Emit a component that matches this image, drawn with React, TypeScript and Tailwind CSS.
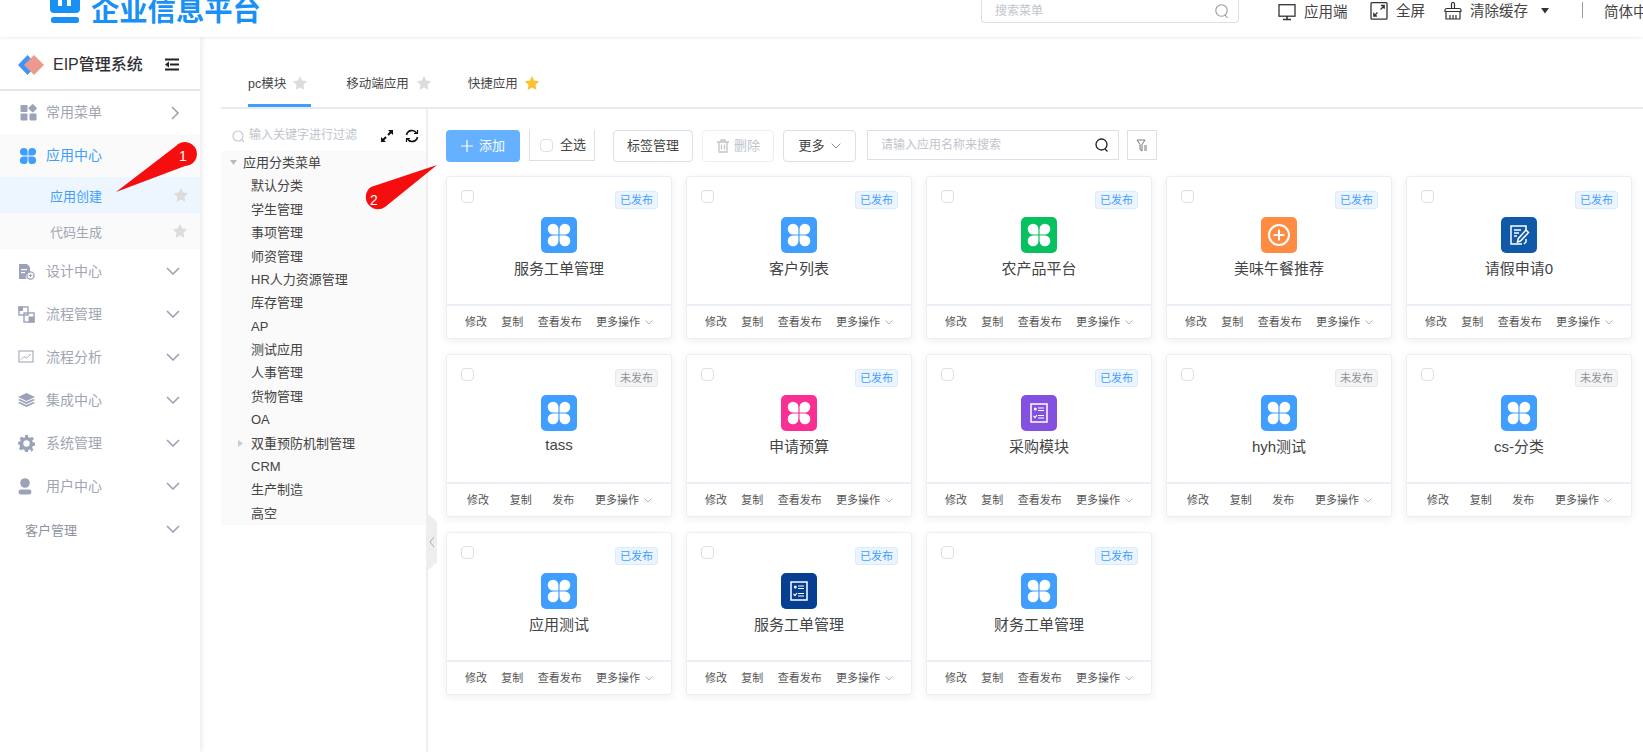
import React from "react";

const Clover = ({ c = "#fff", s = 28 }: { c?: string; s?: number }) => (
  <svg width={s} height={s} viewBox="0 0 24 24">
    <path fill={c} d="M11.5 11.5H7a4.6 4.6 0 1 1 4.5-4.5zM12.5 11.5V7A4.6 4.6 0 1 1 17 11.5zM11.5 12.5V17A4.6 4.6 0 1 1 7 12.5zM12.5 12.5H17A4.6 4.6 0 1 1 12.5 17z" />
  </svg>
);

const Star = ({ c = "#dcdcdc", s = 16 }: { c?: string; s?: number }) => (
  <svg width={s} height={s} viewBox="0 0 24 24">
    <path fill={c} d="M12 1.5l3.2 6.9 7.5.9-5.5 5.2 1.4 7.5L12 18.8l-6.6 3.7 1.4-7.5L1.3 9.3l7.5-.9z" />
  </svg>
);

const Chevron = ({ c = "#9aa3b4", s = 14, w = 1.6 }: { c?: string; s?: number; w?: number }) => (
  <svg width={s} height={s * 0.6} viewBox="0 0 14 8.4" fill="none">
    <path d="M1 1l6 6 6-6" stroke={c} strokeWidth={w} />
  </svg>
);

const G = "#9aa3b8";
const ic = {
  common: (
    <svg width="17" height="17" viewBox="0 0 17 17" fill={G}>
      <rect x="0.5" y="1" width="7" height="7" rx="1" />
      <rect x="9.5" y="1" width="6.4" height="6.4" rx="1" transform="rotate(45 12.7 4.2)" />
      <rect x="0.5" y="9.5" width="7" height="7" rx="1" />
      <rect x="9.5" y="9.5" width="7" height="7" rx="1" />
    </svg>
  ),
  design: (
    <svg width="17" height="17" viewBox="0 0 17 17" fill={G}>
      <path d="M1 1h8l3 3v5a4.5 4.5 0 0 0-3.5 7H1z" />
      <rect x="3" y="6" width="6" height="1.2" fill="#fff" />
      <rect x="3" y="9" width="4" height="1.2" fill="#fff" />
      <circle cx="12.5" cy="12.5" r="3.6" fill="none" stroke={G} strokeWidth="1.3" />
      <path d="M10.7 12.5h3.6M12.5 10.7v3.6" stroke={G} strokeWidth="1.1" />
    </svg>
  ),
  flow: (
    <svg width="17" height="17" viewBox="0 0 17 17" fill="none" stroke={G}>
      <rect x="1" y="1" width="9" height="8" strokeWidth="1.4" />
      <rect x="6" y="7" width="10" height="9" strokeWidth="1.4" />
      <rect x="1" y="1" width="3.5" height="3.5" fill={G} />
      <rect x="11" y="11" width="5" height="5" fill={G} />
    </svg>
  ),
  chart: (
    <svg width="16" height="14" viewBox="0 0 16 14" fill="none" stroke="#a9afbf">
      <rect x="1" y="1" width="14" height="11" strokeWidth="1.2" />
      <path d="M3 9.5l3-3 2.5 1.5L13 4" strokeWidth="1" />
    </svg>
  ),
  layers: (
    <svg width="17" height="14" viewBox="0 0 17 14" fill={G}>
      <path d="M8.5 0L17 4l-8.5 4L0 4z" />
      <path d="M1.8 6L0 7l8.5 4L17 7l-1.8-1-6.7 3.1zM1.8 9L0 10l8.5 4 8.5-4-1.8-1-6.7 3.1z" />
    </svg>
  ),
  gear: (
    <svg width="17" height="17" viewBox="0 0 24 24" fill={G}>
      <path d="M10 0h4l.7 3.2 2.3 1 2.8-1.8 2.8 2.8L20 8l1 2.3 3 .7v4l-3 .7-1 2.3 1.8 2.8-2.8 2.8L17 20.2l-2.3 1L14 24h-4l-.7-2.8-2.3-1-2.8 1.6-2.8-2.8L3 16l-1-2.3L0 13v-3l2.8-.7 1-2.3L2.2 5l2.8-2.8L7.8 4l2.3-1zM12 7.5a4.5 4.5 0 1 0 0 9 4.5 4.5 0 0 0 0-9z" />
    </svg>
  ),
  user: (
    <svg width="14" height="17" viewBox="0 0 14 17" fill={G}>
      <circle cx="7" cy="5" r="4.8" />
      <rect x="0.5" y="11.5" width="13" height="5" rx="2.4" />
    </svg>
  ),
};

const menu1 = [{ t: "设计中心", i: ic.design }, { t: "流程管理", i: ic.flow }, { t: "流程分析", i: ic.chart }, { t: "集成中心", i: ic.layers }, { t: "系统管理", i: ic.gear }, { t: "用户中心", i: ic.user }];

const Sidebar = () => (
  <aside className="relative z-10 flex w-[200px] shrink-0 flex-col bg-white shadow-[2px_0_5px_rgba(0,0,0,0.08)]">
    <div className="flex h-[54px] shrink-0 items-center border-b-2 border-[#e5e6ea] pl-[18px] pr-[21px] pt-[3px]">
      <svg width="26" height="20" viewBox="0 0 26 20">
        <path d="M9.5 0l9.5 10-9.5 10L0 10z" fill="#3f95f7" />
        <path d="M16 0l10 10-10 10L6 10z" fill="#ec9a8d" />
      </svg>
      <span className="ml-[9px] flex-1 text-[16px] font-medium text-[#303133]">EIP管理系统</span>
      <svg width="14" height="13" viewBox="0 0 14 13" fill="#222">
        <rect y="0.5" width="14" height="2" />
        <rect x="5" y="5.5" width="9" height="2" />
        <rect y="10.5" width="14" height="2" />
        <path d="M4 3.5v6L0 6.500z" />
      </svg>
    </div>
    <div className="flex h-[43px] items-center pl-5 pr-[20px]">
      <span className="flex w-[26px]">{ic.common}</span>
      <span className="flex-1 text-[14px] text-[#a0a5b2]">常用菜单</span>
      <svg width="9" height="14" viewBox="0 0 9 14" fill="none"><path d="M1 1l6 6-6 6" stroke="#9aa3b4" strokeWidth="1.6" /></svg>
    </div>
    <div className="bg-[#fafafa]">
      <div className="flex h-[43px] items-center pl-[18px]">
        <span className="flex w-[28px]"><Clover c="#409eff" s={20} /></span>
        <span className="text-[14px] text-[#409eff]">应用中心</span>
      </div>
      <div className="flex h-[36px] items-center bg-[#edf6ff] pl-[50px] pr-[11px]">
        <span className="mt-[3px] flex-1 text-[13px] text-[#409eff]">应用创建</span>
        <Star />
      </div>
      <div className="flex h-[36px] items-center pl-[50px] pr-3">
        <span className="mt-[3px] flex-1 text-[13px] text-[#a0a5b2]">代码生成</span>
        <Star />
      </div>
    </div>
    <div className="pt-[0.5px]">
      {menu1.map((m) => (
        <div key={m.t} className="flex h-[43px] items-center pl-[18px] pr-[20px]">
          <span className="flex w-[28px]">{m.i}</span>
          <span className="flex-1 text-[14px] text-[#a0a5b2]">{m.t}</span>
          <Chevron />
        </div>
      ))}
      <div className="flex h-[43px] items-center pl-[25px] pr-[20px]">
        <span className="mt-[3px] flex-1 text-[13px] text-[#8d929e]">客户管理</span>
        <Chevron />
      </div>
    </div>
  </aside>
);

const Header = () => (
  <header className="relative z-20 flex h-[37px] shrink-0 items-start overflow-hidden bg-white text-[14px] text-[#444] shadow-[0_1px_4px_rgba(0,0,0,0.08)] [&>*]:shrink-0">
    <div className="ml-[50px] mt-[-9px] flex w-[212px] items-center">
      <svg className="mt-[-6px]" width="30" height="32" viewBox="0 0 30 32" fill="#1890f5">
        <path d="M0 0h30v17a4 4 0 0 1-4 4H4a4 4 0 0 1-4-4zM8 8v6h4V8zm9 0v6h4V8z" fillRule="evenodd" />
        <rect x="1" y="25" width="28" height="6" rx="2.5" />
      </svg>
      <span className="ml-[11px] whitespace-nowrap text-[28.3px] font-bold leading-[40px] text-[#1890f5]">企业信息平台</span>
    </div>
    <div className="ml-[719px] flex h-[23px] w-[258px] items-center justify-between rounded-b-sm border border-t-0 border-[#dcdfe6] pl-[13px] pr-[9px] text-[12px] text-[#c0c4cc]">
      <span>搜索菜单</span>
      <svg width="14" height="16" viewBox="0 0 14 16" fill="none" stroke="#999" strokeWidth="1.1"><circle cx="6.5" cy="7.5" r="5.7" /><path d="M10 12l2.5 3" /></svg>
    </div>
    <div className="ml-[39px] mt-[2px] flex items-center">
      <svg width="18" height="17" viewBox="0 0 18 17" fill="none" stroke="#333" strokeWidth="1.3"><rect x="1" y="0.7" width="16" height="11.5" /><path d="M9 12v3M5 15.5h8" strokeWidth="1.6" /></svg>
      <span className="ml-2 w-[44px] whitespace-nowrap text-[14.5px] leading-5">应用端</span>
    </div>
    <div className="ml-[22px] mt-[1px] flex items-center">
      <svg width="18" height="18" viewBox="0 0 18 18" fill="none" stroke="#333" strokeWidth="1.3"><rect x="1" y="0.7" width="16" height="16.5" rx="1" /><path d="M10.5 7.5L14 4M11 3.5h3.2v3.2M7.5 10.5L4 14M3.8 10.8V14h3.2" /></svg>
      <span className="ml-2 whitespace-nowrap text-[14.5px] leading-5">全屏</span>
    </div>
    <div className="ml-[19px] mt-[1px] flex items-center">
      <svg width="18" height="18" viewBox="0 0 18 18" fill="none" stroke="#333" strokeWidth="1.2"><path d="M7.5 6.5V2a1.5 1.5 0 0 1 3 0v4.5" /><path d="M1 8c0-1 1-1.500 2-1.500h12c1 0 2 .5 2 1.500v1.500H1zM2 9.500V17h14V9.500M6 13v4M9 13v4M12 13v4" /></svg>
      <span className="ml-2 whitespace-nowrap text-[14.5px] leading-5">清除缓存</span>
    </div>
    <svg className="ml-[13px] mt-[8px]" width="8" height="6" viewBox="0 0 8 6" fill="#333"><path d="M0 0h8L4 5.500z" /></svg>
    <div className="ml-[33px] mt-[2px] h-4 w-px bg-[#999]" />
    <span className="ml-[21px] mt-[2px] whitespace-nowrap text-[14.5px] leading-5">简体中文</span>
  </header>
);

const tree = ["默认分类", "学生管理", "事项管理", "师资管理", "HR人力资源管理", "库存管理", "AP", "测试应用", "人事管理", "货物管理", "OA", "双重预防机制管理", "CRM", "生产制造", "高空"];

const TreePanel = () => (
  <div className="relative w-[207px] shrink-0 border-r-2 border-[#eeeef0]">
    <div className="flex h-[42px] items-end pb-[8px] pl-[11px] text-[#c0c4cc]">
      <svg width="13" height="13" viewBox="0 0 13 13" fill="none" stroke="#c0c4cc" strokeWidth="1.1"><circle cx="6" cy="6" r="5" /><path d="M10 10l2 2" /></svg>
      <span className="ml-[4px] w-[131px] whitespace-nowrap text-[12px] leading-4">输入关键字进行过滤</span>
      <svg width="14" height="14" viewBox="0 0 14 14" fill="#111"><path d="M8 1h5v5l-1.800-1.800-2.500 2.500-1.400-1.400 2.500-2.500zM6 13H1V8l1.800 1.800 2.500-2.500 1.400 1.400-2.500 2.500z" /></svg>
      <svg className="ml-[11px]" width="14" height="14" viewBox="0 0 14 14" fill="none" stroke="#111" strokeWidth="1.6"><path d="M1.500 6A5.500 5.500 0 0 1 11.500 4M12.500 8A5.500 5.500 0 0 1 2.500 10" /><path d="M12.500 1v3.500H9M1.500 13V9.500H5" strokeWidth="1.200" /></svg>
    </div>
    <div className="h-[374px] bg-[#fafafa] text-[13px] text-[#555860]">
      <div className="flex h-[23.4px] items-center pl-[9px]">
        <svg width="7" height="5" viewBox="0 0 7 5" fill="#bbb"><path d="M0 0h7L3.500 5z" /></svg>
        <span className="ml-[6px] text-[#444]">应用分类菜单</span>
      </div>
      {tree.map((t) => (
        <div key={t} className="relative flex h-[23.4px] items-center pl-[30px] text-[#444]">
          {t === "双重预防机制管理" && (
            <svg className="absolute left-[17px]" width="5" height="7" viewBox="0 0 5 7" fill="#c8ccd4"><path d="M0 0l5 3.500L0 7z" /></svg>
          )}
          {t}
        </div>
      ))}
    </div>
    <div className="absolute right-[-11px] top-[404px] flex h-[58px] w-[10px] items-center justify-center bg-[#eeeeef] [clip-path:polygon(0_0,100%_15%,100%_85%,0_100%)]">
      <svg width="6" height="12" viewBox="0 0 6 12" fill="none" stroke="#aaa"><path d="M5 1L1 6l4 5" /></svg>
    </div>
  </div>
);

const Btn = ({ children, w, cls = "" }: { children: React.ReactNode; w: string; cls?: string }) => (
  <div className={`flex h-8 items-center justify-center rounded-sm border border-[#dcdfe6] text-[13px] text-[#444] ${w} ${cls}`}>{children}</div>
);

const Toolbar = () => (
  <div className="flex h-8 items-start">
    <div className="flex h-8 w-[74px] items-center justify-center rounded-sm bg-[#66b1ff] text-[13px] text-white">
      <svg width="12" height="12" viewBox="0 0 12 12" stroke="#fff" strokeWidth="1.200"><path d="M6 0v12M0 6h12" /></svg>
      <span className="ml-[6px]">添加</span>
    </div>
    <div className="ml-[9px] flex h-[31px] w-[66px] items-center border border-t-0 border-[#dcdfe6] pl-[10px] text-[13px] text-[#444]">
      <span className="h-[13px] w-[13px] rounded-sm border border-[#dcdfe6]" />
      <span className="ml-[7px]">全选</span>
    </div>
    <Btn w="w-[80px] ml-[18px]">标签管理</Btn>
    <Btn w="w-[72px] ml-[9px]" cls="border-[#ebeef5] text-[#c0c4cc]">
      <svg width="14" height="14" viewBox="0 0 14 14" fill="none" stroke="#c0c4cc" strokeWidth="1.300"><path d="M1 3h12M5 3V1h4v2M3 3v10h8V3M5.500 5.500v5M8.500 5.500v5" /></svg>
      <span className="ml-1">删除</span>
    </Btn>
    <Btn w="w-[73px] ml-[9px]">
      更多
      <span className="ml-[6px]"><Chevron c="#777" s={10} w={1.1} /></span>
    </Btn>
    <div className="ml-[11px] flex h-[30px] w-[252px] items-center justify-between border border-[#dcdfe6] pl-[13px] pr-[9px] text-[12px] text-[#c0c4cc]">
      <span>请输入应用名称来搜索</span>
      <svg width="14" height="15" viewBox="0 0 14 15" fill="none" stroke="#222" strokeWidth="1.300"><circle cx="6.500" cy="6.500" r="5.500" /><path d="M10 11l2.500 2.500" /></svg>
    </div>
    <div className="ml-2 flex h-[30px] w-[30px] items-center justify-center border border-[#dcdfe6]">
      <svg width="12" height="13" viewBox="0 0 12 13" fill="none" stroke="#777" strokeWidth="1"><path d="M1 1h8L6 5.500V12L4 10.500v-5zM8 7h3M8 9h3M8 11h3" /></svg>
    </div>
  </div>
);

const FormIcon = () => (
  <svg width="24" height="24" viewBox="0 0 24 24" fill="none" stroke="#fff">
    <rect x="4" y="3" width="16" height="18" strokeWidth="1.500" />
    <circle cx="8.300" cy="8" r="1.500" fill="#fff" stroke="none" />
    <path d="M11 7h6M11 9.500h6M11 14.500h6M11 17h6" strokeWidth="1.200" />
    <path d="M6.500 15l1.500 1.500 2-2.500" strokeWidth="1.200" />
  </svg>
);

const icons: Record<string, React.ReactNode> = {
  clover: <Clover />,
  plus: (
    <svg width="26" height="26" viewBox="0 0 26 26" fill="none" stroke="#fff" strokeWidth="2"><circle cx="13" cy="13" r="10" /><path d="M13 7.500v11M7.500 13h11" /></svg>
  ),
  edit: (
    <svg width="24" height="24" viewBox="0 0 24 24" fill="none" stroke="#fff" strokeWidth="1.500">
      <path d="M15 21H4V3h15v5" /><path d="M7 7h7M7 10h5M7 13h3" strokeWidth="1.300" />
      <path d="M19 7l2.500 2.500-8 8.500-3 1 .7-3.300z" /><path d="M19 16v3l-2 2" />
    </svg>
  ),
  form: <FormIcon />,
};

type C = { t: string; b: string; k: string; pub?: boolean };
const cards: C[] = [
  { t: "服务工单管理", b: "bg-[#409eff]", k: "clover", pub: true },
  { t: "客户列表", b: "bg-[#409eff]", k: "clover", pub: true },
  { t: "农产品平台", b: "bg-[#07c160]", k: "clover", pub: true },
  { t: "美味午餐推荐", b: "bg-[#ff8c42]", k: "plus", pub: true },
  { t: "请假申请0", b: "bg-[#1058a8]", k: "edit", pub: true },
  { t: "tass", b: "bg-[#409eff]", k: "clover" },
  { t: "申请预算", b: "bg-[#f92f94]", k: "clover", pub: true },
  { t: "采购模块", b: "bg-[#8450e0]", k: "form", pub: true },
  { t: "hyh测试", b: "bg-[#409eff]", k: "clover" },
  { t: "cs-分类", b: "bg-[#409eff]", k: "clover" },
  { t: "应用测试", b: "bg-[#409eff]", k: "clover", pub: true },
  { t: "服务工单管理", b: "bg-[#063f92]", k: "form", pub: true },
  { t: "财务工单管理", b: "bg-[#409eff]", k: "clover", pub: true },
];

const Card = ({ c }: { c: C }) => (
  <div className="flex h-[163px] flex-col rounded-[3px] border border-[#ebeef5] bg-white shadow-[0_2px_8px_rgba(0,0,0,0.07)]">
    <div className="relative flex h-[129px] flex-col items-center border-b-2 border-[#ebeef5] pt-[40px]">
      <span className="absolute left-[14px] top-[13px] h-[13px] w-[13px] rounded-sm border border-[#dcdfe6]" />
      <span className={`absolute right-[13px] top-[14px] flex h-[18px] w-[43px] items-center justify-center rounded-[3px] border text-[11px] ${c.pub ? "border-[#d9ecff] bg-[#ecf5ff] text-[#409eff]" : "border-[#e9e9eb] bg-[#f4f4f5] text-[#909399]"}`}>
        {c.pub ? "已发布" : "未发布"}
      </span>
      <span className={`flex h-9 w-9 items-center justify-center rounded-[5px] ${c.b}`}>{icons[c.k]}</span>
      <span className={`text-[15px] leading-5 text-[#444] ${c.t === "tass" ? "mt-[4px]" : "mt-[6px]"}`}>{c.t}</span>
    </div>
    <div className={`flex flex-1 items-center justify-between pt-[1px] text-[11px] text-[#555] ${c.pub ? "px-[18px]" : "pl-[20px] pr-[19px]"}`}>
      <span>修改</span>
      <span>复制</span>
      <span>{c.pub ? "查看发布" : "发布"}</span>
      <span className="flex items-center">更多操作<span className="ml-[5px]"><Chevron c="#999" s={8} w={1.300} /></span></span>
    </div>
  </div>
);

export default function App() {
  return (
    <div className="relative flex h-[752px] w-[1643px] flex-col overflow-hidden bg-white font-['Liberation_Sans','Noto_Sans_CJK_SC',sans-serif]">
      <Header />
      <div className="flex min-h-0 flex-1">
        <Sidebar />
        <main className="flex min-w-0 flex-1 flex-col pl-[21px]">
          <div className="flex h-[72px] shrink-0 items-end border-b-2 border-[#e9eaef] pl-[27px] text-[12.5px] text-[#444]">
            <div className="flex h-[32px] items-start border-b-[3px] border-[#409eff] pr-[3px]">
              <span className="mr-[6px]">pc模块</span>
              <span className="flex"><Star /></span>
            </div>
            <div className="ml-[35px] flex h-[32px] items-start">
              <span className="mr-[7px]">移动端应用</span>
              <span className="flex"><Star /></span>
            </div>
            <div className="ml-[36px] flex h-[32px] items-start">
              <span className="mr-[6px]">快捷应用</span>
              <span className="flex"><Star c="#f9c22e" /></span>
            </div>
          </div>
          <div className="flex min-h-0 flex-1">
            <TreePanel />
            <div className="flex-1 pl-[18px] pt-[21px]">
              <Toolbar />
              <div className="mt-[14px] grid grid-cols-[repeat(5,226px)] gap-x-[14px] gap-y-[15px]">
                {cards.map((c, i) => <Card key={i} c={c} />)}
              </div>
            </div>
          </div>
        </main>
      </div>
      <svg className="absolute left-[110px] top-[140px] z-30" width="90" height="60" viewBox="0 0 90 60">
        <path d="M6 52L66 6a12 12 0 1 1 9 20z" fill="#f60d0d" />
      </svg>
      <span className="absolute left-[179px] top-[146px] z-30 text-[14px] text-white">1</span>
      <svg className="absolute left-[360px] top-[160px] z-30" width="80" height="52" viewBox="0 0 80 52">
        <path d="M77 5L11 27A12 12 0 1 0 25 47z" fill="#f60d0d" />
      </svg>
      <span className="absolute left-[370px] top-[190px] z-30 text-[14px] text-white">2</span>
    </div>
  );
}
